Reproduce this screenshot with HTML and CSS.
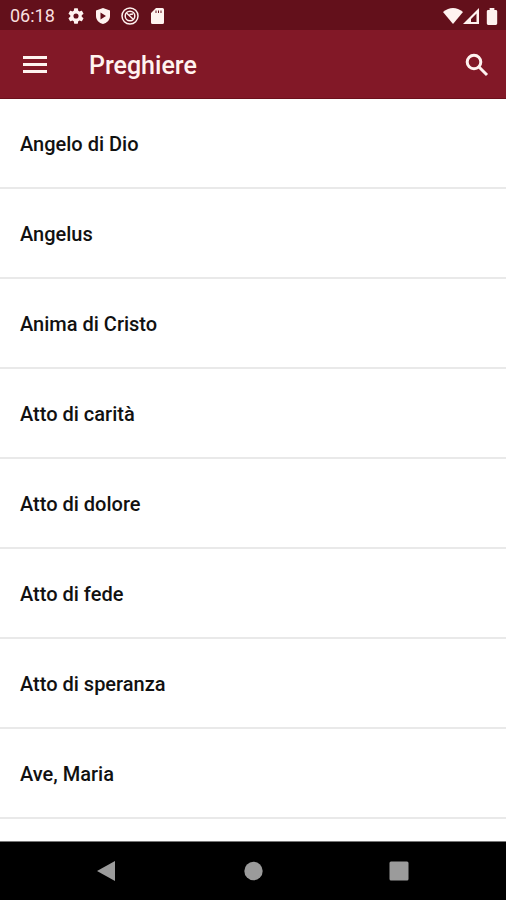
FILE: index.html
```html
<!DOCTYPE html>
<html lang="it">
<head>
<meta charset="utf-8">
<meta name="viewport" content="width=device-width, initial-scale=1">
<title>Preghiere</title>
<link rel="stylesheet" href="styles.css">
</head>
<body>
<div class="status">
  <time class="clock">06:18</time>
  <div class="notices">
    <svg viewBox="2 2 20 20" aria-hidden="true"><path d="M19.14 12.94c.04-.3.06-.61.06-.94s-.02-.64-.07-.94l2.03-1.58a.49.49 0 0 0 .12-.61l-1.92-3.32a.49.49 0 0 0-.59-.22l-2.39.96c-.5-.38-1.03-.7-1.62-.94l-.36-2.54a.48.48 0 0 0-.48-.41h-3.84a.48.48 0 0 0-.47.41l-.36 2.54c-.59.24-1.13.57-1.62.94l-2.39-.96a.48.48 0 0 0-.59.22L2.74 8.87a.48.48 0 0 0 .12.61l2.03 1.58c-.05.3-.09.63-.09.94s.02.64.07.94l-2.03 1.58a.49.49 0 0 0-.12.61l1.92 3.32c.12.22.37.29.59.22l2.39-.96c.5.38 1.03.7 1.62.94l.36 2.54c.05.24.24.41.48.41h3.84c.24 0 .44-.17.47-.41l.36-2.54c.59-.24 1.13-.56 1.62-.94l2.39.96c.22.08.47 0 .59-.22l1.92-3.32a.48.48 0 0 0-.12-.61zM12 15.2a3.2 3.2 0 1 1 0-6.400 3.2 3.2 0 0 1 0 6.400z"/></svg>
    <svg viewBox="0 0 16 16" aria-hidden="true"><path fill-rule="evenodd" d="M8 0 15 2.500V8c0 4-3 7-7 8-4-1-7-4-7-8V2.500zM5.500 4.500v7L11 8z"/></svg>
    <svg viewBox="0 0 18 18" class="round" aria-hidden="true"><circle cx="9" cy="9" r="8"/><circle cx="9" cy="9" r="4.800"/><path d="M5.500 6 12.500 12.500M8.500 7.500 12 7"/></svg>
    <svg viewBox="0 0 16 16" aria-hidden="true"><path fill-rule="evenodd" d="M7 0h6.500Q15 0 15 1.500v13q0 1.500-1.500 1.500h-10Q2 16 2 14.500V5zM6.500 2.500v2.500h1V2.500zM9 2.500v2.500h1V2.500zM11.500 2.500v2.500h1V2.500z"/></svg>
  </div>
  <div class="signals">
    <svg viewBox="0 0 20 16" class="wifi" aria-hidden="true"><path d="M0 4Q10-4 20 4L10 16z"/></svg>
    <svg viewBox="0 0 16 16" class="cell" aria-hidden="true"><path fill-rule="evenodd" d="M16 0v16H0zM13.500 5.500 8 11v3h5.500z"/></svg>
    <svg viewBox="0 0 12 18" class="battery" aria-hidden="true"><path d="M3.500 0h5v2H10q1.500 0 1.500 1.500v13Q11.500 18 10 18H2Q.5 18 .5 16.500v-13Q.5 2 2 2h1.500z"/></svg>
  </div>
</div>
<header class="bar">
  <button class="icon-button" type="button" aria-label="Menu"><svg viewBox="0 0 24 20"><path d="M0 1h24v3H0zM0 8h24v3H0zM0 15h24v3H0z"/></svg></button>
  <h1>Preghiere</h1>
  <button class="icon-button search" type="button" aria-label="Cerca"><svg viewBox="0 0 24 24"><circle cx="9" cy="9" r="6.800"/><path d="m14 14 8 8"/></svg></button>
</header>
<main class="list">
  <ul>
    <li><a href="#">Angelo di Dio</a></li>
    <li><a href="#">Angelus</a></li>
    <li><a href="#">Anima di Cristo</a></li>
    <li><a href="#">Atto di carità</a></li>
    <li><a href="#">Atto di dolore</a></li>
    <li><a href="#">Atto di fede</a></li>
    <li><a href="#">Atto di speranza</a></li>
    <li><a href="#">Ave, Maria</a></li>
  </ul>
</main>
<nav class="system">
  <button type="button" aria-label="Indietro"><svg viewBox="0 0 20 22"><path d="M18 1v20L0 11z"/></svg></button>
  <button type="button" aria-label="Home"><svg viewBox="0 0 20 22"><circle cx="10.500" cy="11" r="9.200"/></svg></button>
  <button type="button" aria-label="Recenti"><svg viewBox="0 0 20 22"><rect x="0.500" y="1.500" width="19" height="19" rx="1.500"/></svg></button>
</nav>
</body>
</html>
```
FILE: styles.css
```css
* {
  box-sizing: border-box;
}

body {
  margin: 0;
  height: 100vh;
  display: flex;
  flex-direction: column;
  background: #fff;
  color: #111;
  font-family: Roboto, "Liberation Sans", sans-serif;
}

button {
  border: 0;
  padding: 0;
  background: none;
  display: flex;
  align-items: center;
  justify-content: center;
}

svg {
  display: block;
  fill: #fff3f0;
}

.status {
  flex: none;
  height: 30px;
  padding: 2px 8px 0 10px;
  display: flex;
  align-items: center;
  background: #63101b;
  color: #f8dfdf;
}

.clock {
  font-size: 18px;
  line-height: 28px;
}

.notices {
  display: flex;
  align-items: center;
  gap: 11px;
  margin-left: 13px;
}

.notices svg {
  width: 16px;
  height: 16px;
}

.notices .round {
  width: 18px;
  height: 18px;
  margin: 0 -1px;
  fill: none;
  stroke: #fff3f0;
  stroke-width: 1.5;
}

.signals {
  display: flex;
  align-items: center;
  margin-left: auto;
}

.wifi {
  width: 20px;
  height: 16px;
}

.cell {
  width: 16px;
  height: 16px;
}

.battery {
  width: 12px;
  height: 17px;
  margin-left: 7px;
}

.bar {
  flex: none;
  height: 69px;
  padding: 2px 6px 0 12px;
  display: flex;
  align-items: center;
  background: #821827;
  border-bottom: 1px solid #6c101c;
}

.icon-button {
  width: 46px;
  height: 48px;
}

.icon-button svg {
  width: 24px;
  height: 20px;
}

.icon-button.search svg {
  width: 24px;
  height: 24px;
  fill: none;
  stroke: #fff3f0;
  stroke-width: 3;
}

h1 {
  flex: 1;
  margin: 0 0 0 31px;
  padding-top: 2px;
  color: #fff3f0;
  font-size: 25px;
  line-height: 32px;
  font-weight: 500;
}

.list {
  flex: 1;
  min-height: 0;
  overflow: hidden;
}

ul {
  margin: 0;
  padding: 0;
  list-style: none;
}

li {
  border-bottom: 2px solid #e9e9e9;
}

li a {
  display: block;
  padding: 33px 20px 31px;
  color: inherit;
  font-size: 20px;
  line-height: 24px;
  font-weight: 500;
  text-decoration: none;
}

.system {
  flex: none;
  height: 59px;
  padding: 0 34px;
  display: flex;
  background: #000;
  border-top: 1px solid #777;
}

.system button {
  flex: 1;
}

.system svg {
  width: 20px;
  height: 22px;
  fill: #9b9b9b;
}
```
